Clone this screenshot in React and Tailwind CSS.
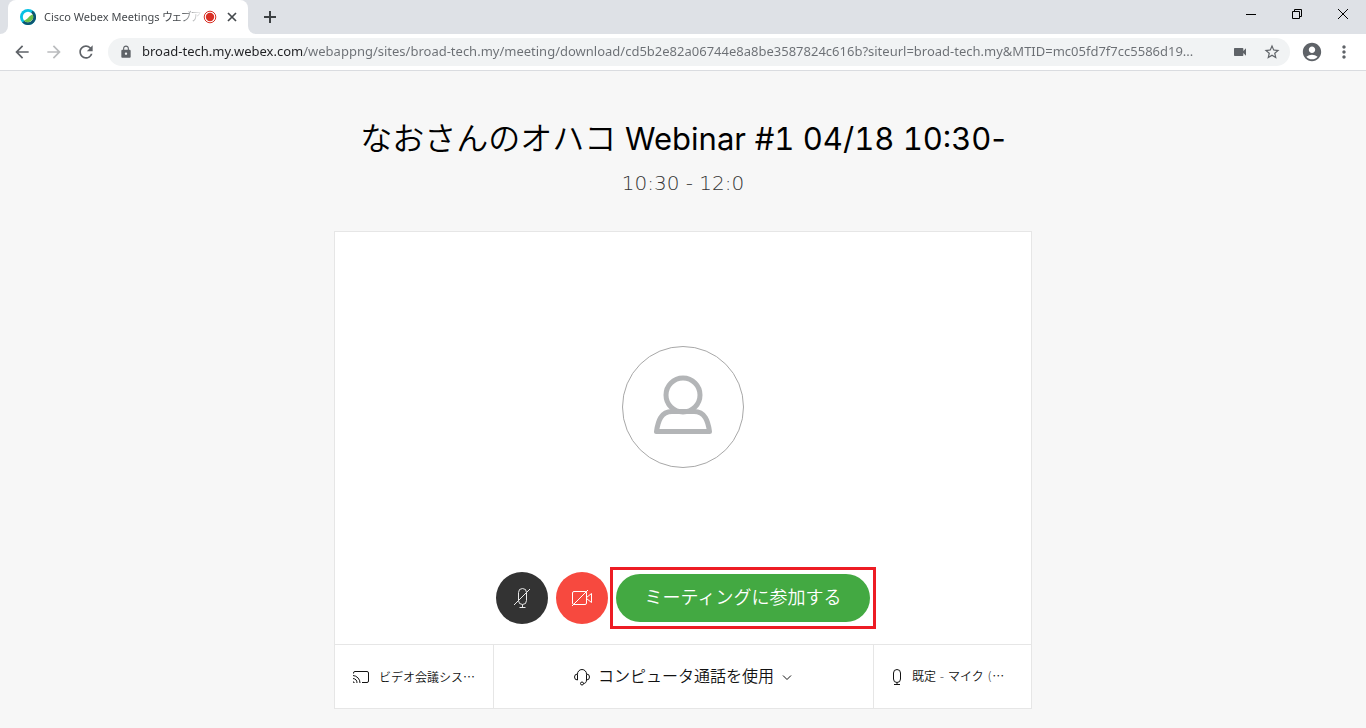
import React, { useState } from "react";
import {
  MdArrowBack,
  MdArrowForward,
  MdRefresh,
  MdLock,
  MdVideocam,
  MdStarBorder,
  MdAccountCircle,
  MdMoreVert,
} from "react-icons/md";

const meeting = {
  host: "なおさんのオハコ",
  title: "Webinar",
  schedule: "#1 04/18 10:30",
  time: "10:30 - 12:0",
  url: "broad-tech.my.webex.com/webappng/sites/broad-tech.my/meeting/download/cd5b2e82a06744e8a8be3587824c616b?siteurl=broad-tech.my&MTID=mc05fd7f7cc5586d19...",
};

const WebexLogo = () => (
  <svg viewBox="0 0 16 16" className="w-4 h-4 shrink-0" aria-hidden="true">
    <circle cx="8" cy="8" r="8" fill="#07c1e4" />
    <path d="M12.5 1.4A8 8 0 1 1 2.2 13.5L5 11.5l6-7Z" fill="#0d5672" />
    <circle cx="8" cy="8" r="5.2" fill="#fff" />
    <path d="M12.6 5.6A5.2 5.2 0 0 1 3.9 11.2C8 11.2 9 6.2 12.6 5.6Z" fill="#6cc04a" />
  </svg>
);

const RecordingIcon = () => (
  <svg viewBox="0 0 14 14" className="w-3.5 h-3.5 shrink-0" aria-hidden="true">
    <circle cx="7" cy="7" r="5.8" fill="none" stroke="#d93025" />
    <circle cx="7" cy="7" r="4.2" fill="#d93025" />
  </svg>
);

const AvatarIcon = () => (
  <svg viewBox="0 0 60 60" className="w-15 h-15 overflow-visible" fill="none" stroke="#b3b5b7" strokeWidth="5" strokeLinejoin="round" aria-hidden="true">
    <circle cx="30" cy="18" r="17" />
    <path d="M3.5 54.5h53C55 44 52 34.5 41 34.5H19C8 34.5 5 44 3.5 54.5Z" />
  </svg>
);

const MicOffIcon = () => (
  <svg viewBox="0 0 20 22" className="w-5 h-5.5" fill="none" stroke="#e8e8e8" aria-hidden="true">
    <rect x="6.5" y="1.5" width="8" height="16" rx="4" />
    <path d="M10.5 17.5v3M7.5 20.5h6M2 18 18 2" />
  </svg>
);

const VideoOffIcon = () => (
  <svg viewBox="0 0 22 18" className="w-5.5 h-4.5" fill="none" stroke="#fff" aria-hidden="true">
    <rect x="1.5" y="2.5" width="14" height="13" rx="1.5" />
    <path d="M15.5 8.5 20.5 4.5V13.5L15.5 9.5M1 17 17 1" />
  </svg>
);

const CastIcon = () => (
  <svg viewBox="0 0 18 14" className="w-4.5 h-3.5 shrink-0" fill="none" stroke="#121212" aria-hidden="true">
    <path d="M1.5 3.5V3A1.5 1.5 0 0 1 3 1.5H15A1.5 1.5 0 0 1 16.5 3V11A1.5 1.5 0 0 1 15 12.5H10" />
    <path d="M1 5.5A7.5 7.5 0 0 1 8 13M1 8.5A4.5 4.5 0 0 1 5 13M1 12h1v1" />
  </svg>
);

const HeadsetIcon = () => (
  <svg viewBox="0 0 18 18" className="w-4.5 h-4.5 shrink-0" fill="none" stroke="#121212" aria-hidden="true">
    <path d="M4.5 12V6.5A4.5 4.5 0 0 1 9 1.5a4.5 4.5 0 0 1 4.5 5V12C13.5 14 12.5 15.5 10.5 15.5" />
    <path d="M4.5 12A3 3 0 0 1 1.5 9A3 3 0 0 1 4.5 6M13.5 12A3 3 0 0 0 16.5 9A3 3 0 0 0 13.5 6" />
    <circle cx="9" cy="15.5" r="1.5" />
  </svg>
);

const MicIcon = () => (
  <svg viewBox="0 0 10 18" className="w-2.5 h-4.5 shrink-0" fill="none" stroke="#121212" aria-hidden="true">
    <rect x="1.5" y="1.5" width="7" height="13" rx="3.5" />
    <path d="M5 14.5v2M2 16.5h6" />
  </svg>
);

const BrowserBar = () => {
  return (
    <header className="font-['Noto_Sans','Noto_Sans_CJK_JP',sans-serif]">
      {/* Tab strip */}
      <div className="flex h-[34px] bg-[#dee1e6]">
        <div className="bg-white w-2">
          <div className="w-2 h-full bg-[#dee1e6] rounded-br-lg"></div>
        </div>
        <div className="flex items-center w-60 pl-3 pr-2.5 bg-white rounded-t-lg">
          <WebexLogo />
          <span className="ml-2 w-[159px] whitespace-nowrap text-[11px] text-[#45494d] [font-feature-settings:'palt'] mask-r-from-85%">
            Cisco Webex Meetings ウェブア
          </span>
          <RecordingIcon />
          <button type="button" aria-label="タブを閉じる" className="ml-auto">
            <svg viewBox="0 0 12 12" className="w-3 h-3" stroke="#45494d" strokeWidth="1.7" aria-hidden="true">
              <path d="M2 2l8 8M10 2l-8 8" />
            </svg>
          </button>
        </div>
        <div className="bg-white w-2">
          <div className="w-2 h-full bg-[#dee1e6] rounded-bl-lg"></div>
        </div>
        <button type="button" aria-label="新しいタブ" className="px-[7px]">
          <svg viewBox="0 0 14 14" className="w-3.5 h-3.5" stroke="#3c4043" strokeWidth="2" aria-hidden="true">
            <path d="M7 1v12M1 7h12" />
          </svg>
        </button>
        <div className="flex h-7 ml-auto">
          <button type="button" aria-label="最小化" className="flex items-center justify-center w-[46px]">
            <svg viewBox="0 0 10 10" className="w-2.5 h-2.5" stroke="#000" aria-hidden="true">
              <path d="M0 5.5h10" />
            </svg>
          </button>
          <button type="button" aria-label="元に戻す" className="flex items-center justify-center w-[46px]">
            <svg viewBox="0 0 10 10" className="w-2.5 h-2.5" fill="none" stroke="#000" aria-hidden="true">
              <path d="M.5 2.5h7v7h-7zM2.5 2.5v-2h7v7h-2" />
            </svg>
          </button>
          <button type="button" aria-label="閉じる" className="flex items-center justify-center w-[46px]">
            <svg viewBox="0 0 10 10" className="w-2.5 h-2.5" stroke="#000" aria-hidden="true">
              <path d="M0 0l10 10M10 0L0 10" />
            </svg>
          </button>
        </div>
      </div>

      {/* Toolbar */}
      <div className="flex items-center h-[37px] px-3 bg-white border-b border-[#dadce0] text-[#5f6368]">
        <div className="flex items-center gap-3 mr-3">
          <button type="button" aria-label="戻る">
            <MdArrowBack className="w-5 h-5" />
          </button>
          <button type="button" aria-label="進む">
            <MdArrowForward className="w-5 h-5 text-[#babcbe]" />
          </button>
          <button type="button" aria-label="再読み込み">
            <MdRefresh className="w-5 h-5" />
          </button>
        </div>
        <div className="flex items-center flex-1 min-w-0 h-7 pl-[11px] pr-[9px] rounded-full bg-[#f1f3f4]">
          <MdLock className="w-3.5 h-3.5 shrink-0" />
          {/* host is dark, the path after it is grey */}
          <input
            type="text"
            readOnly
            aria-label="アドレス"
            value={meeting.url}
            className="flex-1 min-w-0 ml-[9px] text-[13px] text-ellipsis text-transparent bg-clip-text bg-[linear-gradient(90deg,#202124_162px,#6b6f74_162px)] outline-none"
          />
          <button type="button" aria-label="カメラ" className="ml-4">
            <MdVideocam className="w-4 h-4" />
          </button>
          <button type="button" aria-label="ブックマーク" className="ml-[15px]">
            <MdStarBorder className="w-[18px] h-[18px]" />
          </button>
        </div>
        <button type="button" aria-label="プロフィール" className="ml-[11px]">
          <MdAccountCircle className="w-[22px] h-[22px]" />
        </button>
        <button type="button" aria-label="メニュー" className="ml-[11px]">
          <MdMoreVert className="w-5 h-5" />
        </button>
      </div>
    </header>
  );
};

const App = () => {
  const [muted, setMuted] = useState(true);
  const [videoOff, setVideoOff] = useState(true);

  return (
    <div className="flex flex-col min-h-screen bg-[#f7f7f7] font-['Noto_Sans_CJK_JP',sans-serif]">
      <BrowserBar />

      <main className="flex-1 pt-11">
        <h1 className="text-center text-[31px] leading-12 text-black font-['Inter','Noto_Sans_CJK_JP',sans-serif]">
          <span className="text-[32px] font-[350]">{meeting.host}</span> {meeting.title}{" "}
          <span className="tabular-nums">{meeting.schedule}</span>-
        </h1>
        <p className="mt-1 text-center text-xl leading-8 text-[#333] font-extralight font-['DejaVu_Sans',sans-serif]">
          {meeting.time}
        </p>

        {/* Preview card */}
        <section className="w-full max-w-[698px] mx-auto mt-8 bg-white border border-[#e6e6e6]">
          <div className="flex flex-col items-center pt-[114px] pb-5">
            <div className="flex items-center justify-center w-[122px] h-[122px] rounded-full border border-[#a8a8a8]">
              <AvatarIcon />
            </div>

            <div className="flex items-center gap-2 mt-[104px]">
              <button
                type="button"
                aria-label="ミュート"
                aria-pressed={muted}
                onClick={() => setMuted(!muted)}
                className="flex items-center justify-center w-13 h-13 rounded-full bg-[#333]"
              >
                <MicOffIcon />
              </button>
              <button
                type="button"
                aria-label="ビデオ"
                aria-pressed={videoOff}
                onClick={() => setVideoOff(!videoOff)}
                className="flex items-center justify-center w-13 h-13 rounded-full bg-[#f7493f]"
              >
                <VideoOffIcon />
              </button>
              <div className="relative">
                <button type="button" className="px-[29px] pb-1 h-12 rounded-full bg-[#43a942] text-lg text-white font-[350]">
                  ミーティングに参加する
                </button>
                <div className="absolute -inset-x-1.5 -inset-y-[7px] border-3 border-[#ed1c24] pointer-events-none"></div>
              </div>
            </div>
          </div>

          {/* Device settings */}
          <div className="grid grid-cols-[158px_1fr_158px] h-16 border-t border-[#e6e6e6] text-[#121212] font-[350]">
            <button type="button" className="flex items-center gap-[9px] pl-[17px] text-xs">
              <CastIcon />
              ビデオ会議シス…
            </button>
            <div className="flex items-center justify-center gap-[7px] pr-0.5 border-l border-[#e6e6e6]">
              <HeadsetIcon />
              <select aria-label="音声接続" className="appearance-none pb-1 text-base">
                <option>コンピュータ通話を使用</option>
              </select>
              <svg viewBox="0 0 10 10" className="w-2.5 h-2.5" fill="none" stroke="#121212" aria-hidden="true">
                <path d="M1 3.5l4 4 4-4" />
              </svg>
            </div>
            <button type="button" className="flex items-center gap-2.5 pl-[18px] text-xs border-l border-[#e6e6e6]">
              <MicIcon />
              <span>
                <span className="font-['DejaVu_Sans','Noto_Sans_CJK_JP',sans-serif]">既定 - マイク (</span>…
              </span>
            </button>
          </div>
        </section>
      </main>
    </div>
  );
};

export default App;
